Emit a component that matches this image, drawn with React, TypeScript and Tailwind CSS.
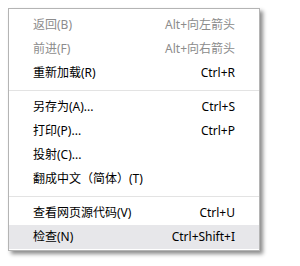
const items = [
  { label: '返回(B)', shortcut: 'Alt+向左箭头', disabled: true },
  { label: '前进(F)', shortcut: 'Alt+向右箭头', disabled: true },
  { label: '重新加载(R)', shortcut: 'Ctrl+R' },
  { sep: true },
  { label: '另存为(A)...', shortcut: 'Ctrl+S' },
  { label: '打印(P)...', shortcut: 'Ctrl+P' },
  { label: '投射(C)...' },
  { label: '翻成中文（简体）(T)' },
  { sep: true },
  { label: '查看网页源代码(V)', shortcut: 'Ctrl+U' },
  { label: '检查(N)', shortcut: 'Ctrl+Shift+I', active: true },
];

export default function App() {
  return (
    <div className="w-[300px] h-[266px] bg-white pt-2 pl-2">
      <div
        className="w-[252px] bg-white border border-[#b4b4b4] pt-1 pb-px shadow-[3px_3px_4px_rgba(0,0,0,0.45)] text-[12px]"
        style={{ fontFamily: '"Noto Sans", "Noto Sans CJK SC", sans-serif' }}
      >
        {items.map((item, i) =>
          item.sep ? (
            <div key={i} className="h-[10px] flex items-center">
              <div className="w-full h-px bg-[#e3e3e3]" />
            </div>
          ) : (
            <div
              key={i}
              className={`h-6 flex items-center justify-between pl-6 pr-6 ${item.active ? 'bg-[#e7e7ea]' : ''} ${item.disabled ? 'text-[#8c8c8c]' : 'text-black'}`}
            >
              <span>{item.label}</span>
              {item.shortcut && <span>{item.shortcut}</span>}
            </div>
          )
        )}
      </div>
    </div>
  );
}
